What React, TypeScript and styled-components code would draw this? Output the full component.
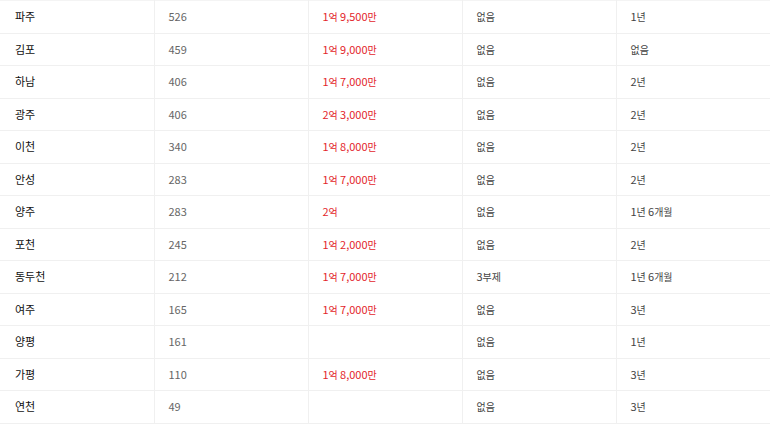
import styled, { createGlobalStyle } from 'styled-components'

const GlobalStyle = createGlobalStyle`
  html, body {
    margin: 0;
    padding: 0;
    background: #fff;
  }
  body {
    font-family: "Noto Sans CJK KR", "Noto Sans", sans-serif;
  }
`

const Table = styled.table`
  width: 770px;
  border-collapse: collapse;
  table-layout: fixed;
  border-top: 1px solid #f4f4f4;
`

const Row = styled.tr`
  height: 32.5px;
  border-bottom: 1px solid #f0f0f0;
`

const Cell = styled.td<{ $tone?: 'name' | 'num' | 'red' | 'plain' }>`
  padding: 0 14px;
  font-size: 11px;
  line-height: 1;
  vertical-align: middle;
  border-left: 1px solid #f0f0f0;
  color: ${({ $tone }) =>
    $tone === 'name' ? '#111' : $tone === 'red' ? '#e3262b' : $tone === 'num' ? '#666' : '#444'};
  font-weight: 400;

  &:first-child {
    border-left: none;
    padding-left: 15px;
  }
`

const Unit = styled.span`
  font-size: 10px;
`

type Item = { region: string; count: string; price: string; extra: string; period: string }

const rows: Item[] = [
  { region: '파주', count: '526', price: '1억 9,500만', extra: '없음', period: '1년' },
  { region: '김포', count: '459', price: '1억 9,000만', extra: '없음', period: '없음' },
  { region: '하남', count: '406', price: '1억 7,000만', extra: '없음', period: '2년' },
  { region: '광주', count: '406', price: '2억 3,000만', extra: '없음', period: '2년' },
  { region: '이천', count: '340', price: '1억 8,000만', extra: '없음', period: '2년' },
  { region: '안성', count: '283', price: '1억 7,000만', extra: '없음', period: '2년' },
  { region: '양주', count: '283', price: '2억', extra: '없음', period: '1년 6개월' },
  { region: '포천', count: '245', price: '1억 2,000만', extra: '없음', period: '2년' },
  { region: '동두천', count: '212', price: '1억 7,000만', extra: '3부제', period: '1년 6개월' },
  { region: '여주', count: '165', price: '1억 7,000만', extra: '없음', period: '3년' },
  { region: '양평', count: '161', price: '', extra: '없음', period: '1년' },
  { region: '가평', count: '110', price: '1억 8,000만', extra: '없음', period: '3년' },
  { region: '연천', count: '49', price: '', extra: '없음', period: '3년' },
]

// digits stay full size, hangul units a touch smaller
const withUnits = (text: string) =>
  text.split(/([0-9,]+)/).map((part, i) =>
    /^[0-9,]+$/.test(part) ? part : part ? <Unit key={i}>{part}</Unit> : null
  )

const App = () => {
  return (
    <>
      <GlobalStyle />
      <Table>
        <tbody>
          {rows.map((r) => (
            <Row key={r.region}>
              <Cell $tone="name">{r.region}</Cell>
              <Cell $tone="num">{r.count}</Cell>
              <Cell $tone="red">{withUnits(r.price)}</Cell>
              <Cell $tone="plain">{withUnits(r.extra)}</Cell>
              <Cell $tone="plain">{withUnits(r.period)}</Cell>
            </Row>
          ))}
        </tbody>
      </Table>
    </>
  )
}

export default App
